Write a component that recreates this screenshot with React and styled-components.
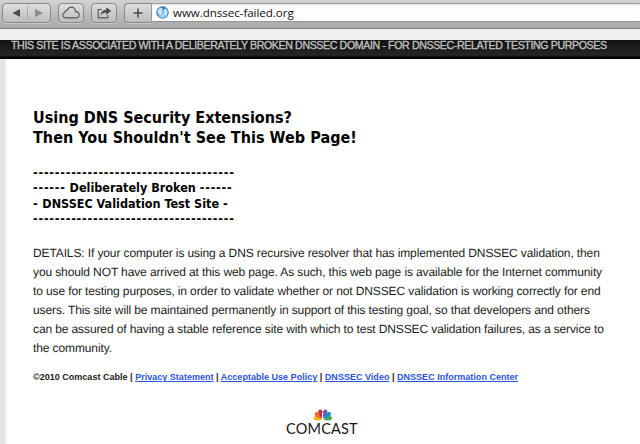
import React from 'react';
import styled, { createGlobalStyle } from 'styled-components';

const GlobalStyle = createGlobalStyle`
  * { box-sizing: border-box; }
  body { margin: 0; background: #fff; overflow: hidden; }
`;

const Window = styled.div`
  width: 640px;
  height: 444px;
  display: flex;
  flex-direction: column;
  background: #fff;
  overflow: hidden;
  font-family: "Liberation Sans", Arial, sans-serif;
`;

const Toolbar = styled.header`
  flex: none;
  height: 29px;
  display: flex;
  align-items: flex-start;
  padding: 3px 0 0 2px;
  background: linear-gradient(#d2d2d2, #aaaaaa 27px);
  border-bottom: 1px solid #808080;
`;

const ToolButton = styled.button`
  width: ${(p) => p.$width}px;
  height: 20px;
  margin: 0 ${(p) => p.$gap}px 0 0;
  padding: 0;
  display: flex;
  align-items: center;
  justify-content: center;
  border: 1px solid #888;
  border-radius: ${(p) => (p.$joined ? '4px 0 0 4px' : '4px')};
  border-right-width: ${(p) => (p.$joined ? 0 : 1)}px;
  background: linear-gradient(#dedede, #bdbdbd);
  box-shadow: 0 1px 0 rgba(255, 255, 255, 0.3);
  svg { display: block; flex: none; }
`;

const AddressField = styled.div`
  flex: 1;
  height: 19px;
  display: flex;
  align-items: center;
  padding-left: 4px;
  border-top: 1px solid #a2a2a2;
  border-left: 1px solid #959595;
  border-bottom: 1px solid #939393;
  background: #fdfdfd;
  box-shadow: inset 0 1px 1px #e2e2e2;
  svg { flex: none; }
`;

const Address = styled.span`
  margin-left: 4px;
  font: 11.6px/17px "Open Sans", sans-serif;
  letter-spacing: ${(p) => p.$tracking}px;
  color: #111;
  white-space: nowrap;
`;

const TabStrip = styled.div`
  flex: none;
  height: 11px;
  background: #efefef;
`;

const Notice = styled.div`
  flex: none;
  height: 19px;
  padding-left: 11px;
  background: linear-gradient(#111, #262626 15px, #1c1c1c 16px, #050505 17px);
  color: #c0c0c0;
  font-size: 10.6px;
  line-height: 11px;
  letter-spacing: ${(p) => p.$tracking}px;
  -webkit-text-stroke: 0.35px #c0c0c0;
  white-space: nowrap;
`;

const Page = styled.main`
  flex: 1;
  padding: 49px 0 0 33px;
  background: linear-gradient(90deg, #e8e8e8, #e2e2e2 4px, #f5f5f5 6px, #fff 8px);
`;

const Line = styled.span`
  display: block;
  width: max-content;
  white-space: pre;
  letter-spacing: ${(p) => p.$tracking || 0}px;
`;

const Dashes = styled.span`
  letter-spacing: 0.78px;
`;

const Title = styled.h1`
  margin: 0;
  font: bold 16px/20px "DejaVu Sans Condensed", "DejaVu Sans", sans-serif;
  font-stretch: condensed;
  color: #000;
`;

const Subtitle = styled.h2`
  margin: 17px 0 0;
  font: bold 12.5px/15.3px "DejaVu Sans Condensed", "DejaVu Sans", sans-serif;
  font-stretch: condensed;
  color: #000;
`;

const Details = styled.p`
  margin: 18px 0 0;
  font-size: 12px;
  line-height: 19px;
  color: #1c1c1c;
  text-rendering: geometricPrecision;
`;

const Footer = styled.footer`
  margin-top: 13px;
  height: 12px;
  font-size: 9px;
  line-height: 12px;
  font-weight: bold;
  color: #222;
  a { color: #2a55dc; text-decoration: underline; }
`;

const Brand = styled.div`
  width: 74px;
  margin: 26px 0 0 253px;
  svg { display: block; }
`;

const Wordmark = styled.div`
  margin-top: 0;
  font: 14.5px/16px Lato, sans-serif;
  letter-spacing: ${(p) => p.$tracking}px;
  color: #161616;
`;

const BackForwardIcon = () => (
  <svg width="46" height="18" viewBox="0 0 46 18">
    <path d="M8.5 9 16 5v8z" fill="#4c4c4c" />
    <path d="M23.5 1.5v14" stroke="#aaa" />
    <path d="M39 9l-8-4v8z" fill="#8b8b8b" />
  </svg>
);

const CloudIcon = () => (
  <svg width="18" height="14" viewBox="0 0 18 14" fill="none" stroke="#555" strokeWidth="1.1">
    <path d="M4.3 11.9C2.1 11.9.9 10.7.9 9.1c0-1.5 1-2.4 2.2-2.6C3 4.9 4 4.1 5.3 4.4 6 2.2 7.500 1.100 9.300 1.100c2.500 0 4.100 1.700 4.100 4.500 2.400.1 3.800 1.300 3.800 3.200s-1.400 3.100-3.300 3.100z" />
  </svg>
);

const ShareIcon = () => (
  <svg width="16" height="14" viewBox="0 0 16 14" fill="none">
    <path d="M6 3.500H2.200v8.400h9.600V9" stroke="#5b5b5b" strokeWidth="1.200" />
    <path d="M4.500 9.600c.4-3.800 2.400-5.600 5.700-5.800V1.300L15.200 5l-5 3.800V6.600C7.900 6.500 6.200 7.400 4.500 9.600z" fill="#4d4d4d" />
  </svg>
);

const PlusIcon = () => (
  <svg width="10" height="10" viewBox="0 0 10 10">
    <path d="M5 .5v9M.5 5h9" stroke="#484848" strokeWidth="1.500" />
  </svg>
);

const GlobeIcon = () => (
  <svg width="13" height="13" viewBox="0 0 13 13">
    <defs>
      <radialGradient id="globe" cx=".5" cy=".75" r=".8">
        <stop offset="0" stopColor="#b5e2ff" />
        <stop offset=".5" stopColor="#5fa6ea" />
        <stop offset="1" stopColor="#285da8" />
      </radialGradient>
    </defs>
    <circle cx="6.500" cy="6.500" r="5.900" fill="url(#globe)" stroke="#3f70b4" strokeWidth=".6" />
    <path d="M2 3.600C3.500 1.700 5.600 1.400 6.600 2L6 3.900l.9 1.300L5.200 6.600 4.800 9 3 7.800 1.500 6.200zM8.200 3.200l2-.6 1.500 3.200-.9 3.200-1.700 1L8 7.200z" fill="#eaf6ff" opacity=".8" />
  </svg>
);

const FEATHERS = [
  ['#f5b619', -75],
  ['#ed6925', -46],
  ['#c92a44', -17],
  ['#6755a5', 17],
  ['#168bd0', 46],
  ['#3bac49', 75],
];

const Peacock = () => (
  <svg width="74" height="12" viewBox="0 0 74 12">
    <g transform="translate(36.800 11)">
      {FEATHERS.map(([color, angle]) => (
        <path
          key={angle}
          d="M0-1C-1.700-4-3.200-7-2.400-8.800 -1.300-10.800 1.300-10.800 2.400-8.800 3.200-7 1.700-4 0-1Z"
          fill={color}
          transform={`rotate(${angle}) scale(.82 ${Math.abs(angle) > 60 ? 0.92 : 1.05})`}
        />
      ))}
      <path d="M-.7-8 .9-6.200 .1-5.700.7 0h-1.400z" fill="#fff" />
    </g>
  </svg>
);

const DETAILS = [
  'DETAILS: If your computer is using a DNS recursive resolver that has implemented DNSSEC validation, then',
  'you should NOT have arrived at this web page. As such, this web page is available for the Internet community',
  'to use for testing purposes, in order to validate whether or not DNSSEC validation is working correctly for end',
  'users. This site will be maintained permanently in support of this testing goal, so that developers and others',
  'can be assured of having a stable reference site with which to test DNSSEC validation failures, as a service to',
  'the community.',
];

export default function App() {
  return (
    <Window>
      <GlobalStyle />
      <Toolbar>
        <ToolButton $width={49} $gap={7} aria-label="Back and forward"><BackForwardIcon /></ToolButton>
        <ToolButton $width={26} $gap={7} aria-label="iCloud tabs"><CloudIcon /></ToolButton>
        <ToolButton $width={26} $gap={7} aria-label="Share"><ShareIcon /></ToolButton>
        <ToolButton $width={27} $gap={0} $joined aria-label="Add bookmark"><PlusIcon /></ToolButton>
        <AddressField>
          <GlobeIcon />
          <Address $tracking={-0.06}>www.dnssec-failed.org</Address>
        </AddressField>
      </Toolbar>
      <TabStrip />
      <Notice $tracking={-0.37}>
        THIS SITE IS ASSOCIATED WITH A DELIBERATELY BROKEN DNSSEC DOMAIN - FOR DNSSEC-RELATED TESTING PURPOSES
      </Notice>
      <Page>
        <Title>
          <Line>Using DNS Security Extensions?</Line>
          <Line $tracking={0.05}>Then You Shouldn't See This Web Page!</Line>
        </Title>
        <Subtitle>
          <Line><Dashes>-------------------------------------</Dashes></Line>
          <Line><Dashes>------</Dashes> Deliberately Broken <Dashes>------</Dashes></Line>
          <Line><Dashes>-</Dashes> DNSSEC Validation Test Site <Dashes>-</Dashes></Line>
          <Line><Dashes>-------------------------------------</Dashes></Line>
        </Subtitle>
        <Details>
          {DETAILS.map((text) => (
            <Line key={text} $tracking={-0.115}>{text}</Line>
          ))}
        </Details>
        <Footer>
          <Line $tracking={0.02}>
            ©2010 Comcast Cable | <a href="#privacy">Privacy Statement</a> | <a href="#policy">Acceptable Use Policy</a> | <a href="#video">DNSSEC Video</a> | <a href="#info">DNSSEC Information Center</a>
          </Line>
        </Footer>
        <Brand>
          <Peacock />
          <Wordmark $tracking={0.2}>COMCAST</Wordmark>
        </Brand>
      </Page>
    </Window>
  );
}
